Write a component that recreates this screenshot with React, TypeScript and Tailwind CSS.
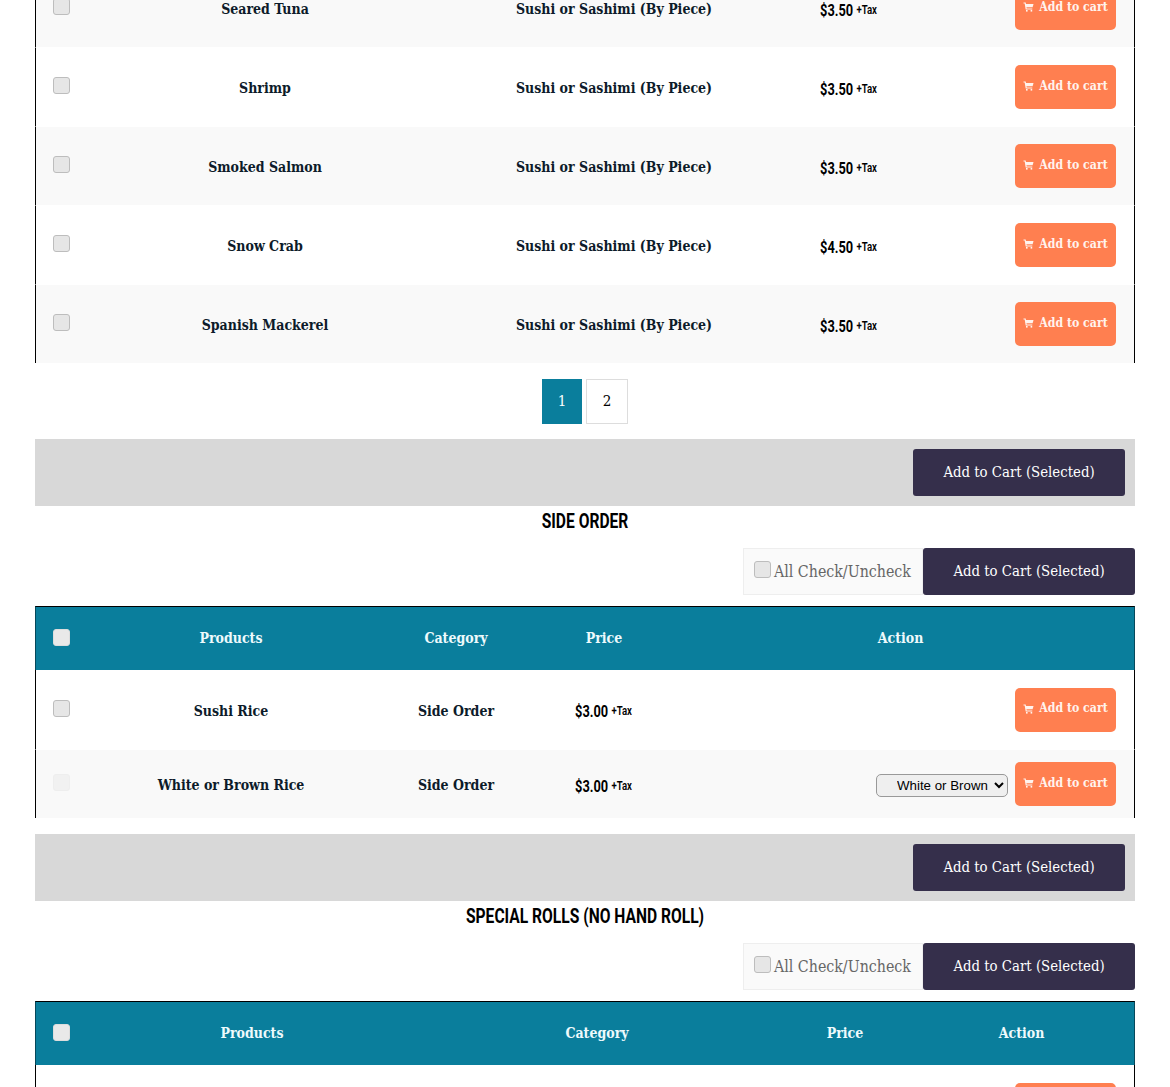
const slab = "font-['DejaVu_Serif_Condensed','DejaVu_Serif',serif]";
const narrow = "font-['Roboto',sans-serif]";

interface Row {
  name: string;
  category: string;
  price: string;
  disabled?: boolean;
  select?: boolean;
  short?: boolean;
}

const CartIcon = () => (
  <svg width="11" height="10" viewBox="0 0 11 10" fill="none" className="shrink-0">
    <path d="M0.5 1H2.2L3.2 7H9.3" stroke="currentColor" strokeWidth="1.2" />
    <path d="M2.6 2H10.5L9.6 5.2H3.1Z" fill="currentColor" />
    <rect x="3" y="8" width="1.6" height="1.6" fill="currentColor" />
    <rect x="7.6" y="8" width="1.6" height="1.6" fill="currentColor" />
  </svg>
);

const CartButton = () => (
  <button
    type="button"
    className={`flex h-11 w-[101px] shrink-0 items-center justify-center gap-[5px] rounded-[5px] bg-[#ff7f50] pb-[2px] text-[12.2px] font-bold text-[#fff3ee] ${slab}`}
  >
    <CartIcon />
    Add to cart
  </button>
);

const Check = ({ disabled }: { disabled?: boolean }) => (
  <input
    type="checkbox"
    disabled={disabled}
    className={
      disabled
        ? "size-[17px] appearance-none rounded-[3px] border border-[#eeeeee] bg-[#f1f1f1]"
        : "size-[17px] appearance-none rounded-[3px] border border-[#bdbdbd] bg-[#e6e6e6]"
    }
  />
);

const Price = ({ value }: { value: string }) => (
  <span className={`flex scale-x-[0.8] items-center gap-[4px] text-black ${narrow}`}>
    <span className="mt-[2px] text-[16px] font-bold">{value}</span>
    <span className="text-[12px] font-semibold">+Tax</span>
  </span>
);

const ProductTable = ({ cols, rows, top }: { cols: string; rows: Row[]; top?: boolean }) => (
  <div className="w-full">
    {!top && (
      <div className={`grid h-16 items-center border-x border-t border-x-[#06485a] border-t-black bg-[#0a7e9c] text-[14px] font-bold text-[#eefafc] ${cols} ${slab}`}>
        <div className="mb-[2px] flex pl-[17px]">
          <input type="checkbox" className="size-[17px] appearance-none rounded-[3px] border border-[#dddddd] bg-[#e9e9e9]" />
        </div>
        <div className="text-center">Products</div>
        <div className="text-center">Category</div>
        <div className="text-center">Price</div>
        <div className="text-center">Action</div>
      </div>
    )}
    {rows.map((row, i) => (
      <div
        key={row.name}
        className={`grid items-center border-x border-x-black ${cols} ${i > 0 || top ? "border-t border-t-white" : ""} ${row.short ? "h-[69px]" : "h-[79px]"} ${(top ? i % 2 === 0 : i % 2 === 1) ? "bg-[#f9f9f9]" : "bg-white"}`}
      >
        <div className="mb-[3px] flex pl-[17px]">
          <Check disabled={row.disabled} />
        </div>
        <div className={`pt-[3px] text-center text-[14px] font-bold text-[#0d1b2a] ${slab}`}>{row.name}</div>
        <div className={`pt-[3px] text-center text-[14px] font-bold text-[#0d1b2a] ${slab}`}>{row.category}</div>
        <div className="flex justify-center pt-[3px]">
          <Price value={row.price} />
        </div>
        <div className="flex items-center justify-end gap-[7px] pr-[18px]">
          {row.select && (
            <select className="mt-[3px] h-[23px] w-[132px] rounded-[5px] border border-[#999999] bg-[#efefef] pl-4 font-['Liberation_Sans',sans-serif] text-[13.3px] text-black">
              <option>White or Brown</option>
            </select>
          )}
          <CartButton />
        </div>
      </div>
    ))}
  </div>
);

const SelectedBar = () => (
  <div className="flex h-[67px] items-center justify-end bg-[#d8d8d8] pr-[10px]">
    <button type="button" className={`h-[47px] w-[212px] rounded-[3px] bg-[#352f4b] text-[14.8px] text-white ${slab}`}>
      Add to Cart (Selected)
    </button>
  </div>
);

const Controls = () => (
  <div className="mt-[13px] mb-[11px] flex justify-end">
    <label className={`flex h-[47px] w-[180px] items-center gap-[3px] border border-[#eeeeee] bg-[#fafafa] pl-[10px] text-[15.8px] text-[#666666] ${slab}`}>
      <span className="mb-[5px] flex">
        <Check />
      </span>
      All Check/Uncheck
    </label>
    <button type="button" className={`h-[47px] w-[212px] rounded-[3px] bg-[#352f4b] text-[14.8px] text-white ${slab}`}>
      Add to Cart (Selected)
    </button>
  </div>
);

const Heading = ({ children }: { children: string }) => (
  <h2 className={`mt-[2px] h-[27px] scale-x-[0.78] text-center text-[20px] leading-[27px] font-bold text-black ${narrow}`}>{children}</h2>
);

const sushi = [
  ["Seared Tuna", "$3.50"],
  ["Shrimp", "$3.50"],
  ["Smoked Salmon", "$3.50"],
  ["Snow Crab", "$4.50"],
  ["Spanish Mackerel", "$3.50"],
].map(([name, price]) => ({ name, price, category: "Sushi or Sashimi (By Piece)" }));

export default function App() {
  return (
    <div className="h-[1087px] overflow-hidden bg-white px-[35px]">
      <div className="-mt-[32px]">
        <ProductTable top cols="grid-cols-[55px_348px_350px_119px_1fr]" rows={sushi} />
      </div>

      <div className="mt-4 mb-[15px] flex justify-center gap-1">
        <span className={`flex h-[45px] w-10 items-center justify-center bg-[#0a7e9c] text-[15px] text-white ${slab}`}>1</span>
        <span className={`flex h-[45px] w-[42px] items-center justify-center border border-[#dddddd] bg-white text-[15px] text-black ${slab}`}>2</span>
      </div>

      <SelectedBar />
      <Heading>SIDE ORDER</Heading>
      <Controls />
      <ProductTable
        cols="grid-cols-[55px_280px_170px_126px_1fr]"
        rows={[
          { name: "Sushi Rice", category: "Side Order", price: "$3.00" },
          { name: "White or Brown Rice", category: "Side Order", price: "$3.00", disabled: true, select: true, short: true },
        ]}
      />

      <div className="mt-4">
        <SelectedBar />
      </div>
      <Heading>SPECIAL ROLLS (NO HAND ROLL)</Heading>
      <Controls />
      <ProductTable
        cols="grid-cols-[55px_322px_368px_128px_1fr]"
        rows={[{ name: " ", category: " ", price: "" }]}
      />
    </div>
  );
}
